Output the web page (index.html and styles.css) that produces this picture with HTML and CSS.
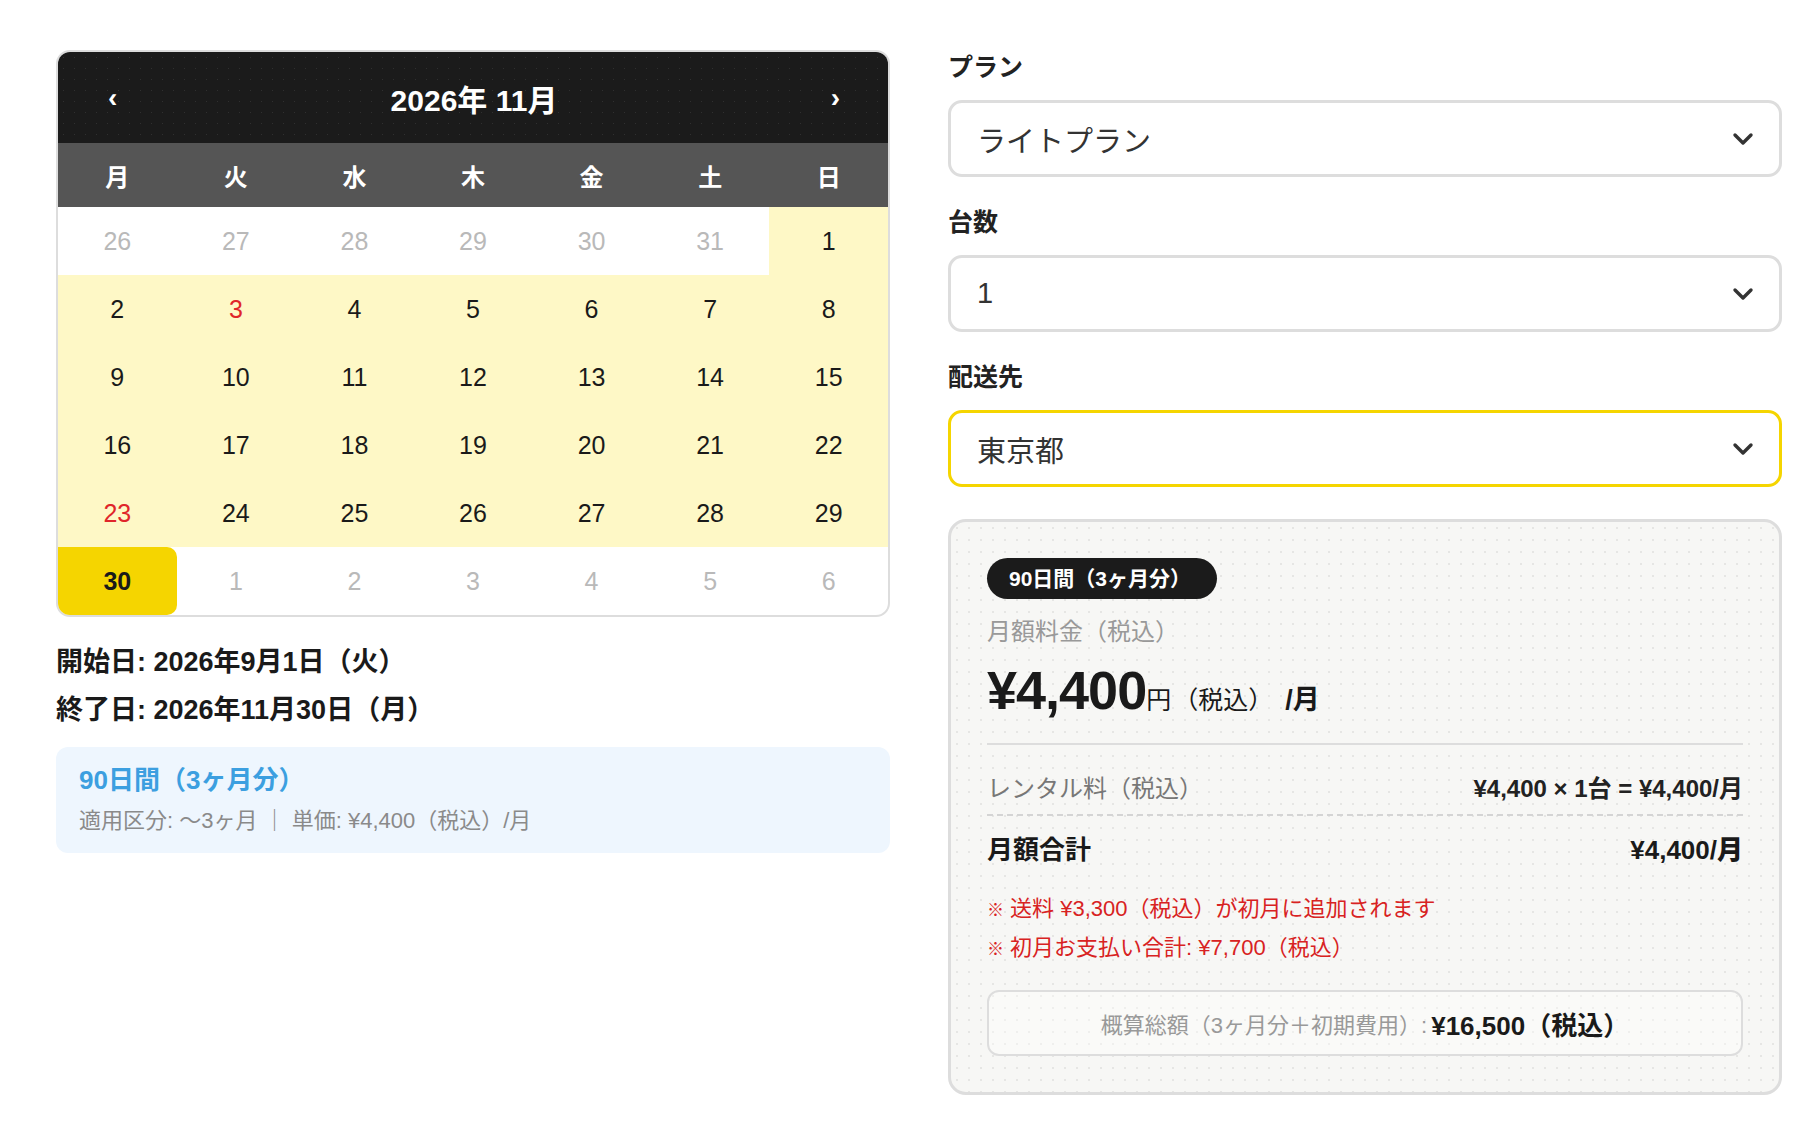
FILE: index.html
```html
<!DOCTYPE html>
<html lang="ja">
<head>
    <meta charset="UTF-8">
    <meta name="viewport" content="width=device-width, initial-scale=1.0">
    <title>レンタル期間の選択</title>
    <link rel="stylesheet" href="styles.css">
</head>
<body>
<div class="page">
    <section class="left">
        <div class="calendar">
            <div class="cal-head">
                <button class="nav">‹</button>
                <div class="cal-title">2026年 11月</div>
                <button class="nav">›</button>
            </div>
            <div class="weekdays">
                <span>月</span><span>火</span><span>水</span><span>木</span><span>金</span><span>土</span><span>日</span>
            </div>
            <div class="days">
                <span class="day other">26</span>
                <span class="day other">27</span>
                <span class="day other">28</span>
                <span class="day other">29</span>
                <span class="day other">30</span>
                <span class="day other">31</span>
                <span class="day range">1</span>

                <span class="day range">2</span>
                <span class="day range holiday">3</span>
                <span class="day range">4</span>
                <span class="day range">5</span>
                <span class="day range">6</span>
                <span class="day range">7</span>
                <span class="day range">8</span>

                <span class="day range">9</span>
                <span class="day range">10</span>
                <span class="day range">11</span>
                <span class="day range">12</span>
                <span class="day range">13</span>
                <span class="day range">14</span>
                <span class="day range">15</span>

                <span class="day range">16</span>
                <span class="day range">17</span>
                <span class="day range">18</span>
                <span class="day range">19</span>
                <span class="day range">20</span>
                <span class="day range">21</span>
                <span class="day range">22</span>

                <span class="day range holiday">23</span>
                <span class="day range">24</span>
                <span class="day range">25</span>
                <span class="day range">26</span>
                <span class="day range">27</span>
                <span class="day range">28</span>
                <span class="day range">29</span>

                <span class="day end">30</span>
                <span class="day other">1</span>
                <span class="day other">2</span>
                <span class="day other">3</span>
                <span class="day other">4</span>
                <span class="day other">5</span>
                <span class="day other">6</span>
            </div>
        </div>

        <div class="dates">
            <p>開始日: 2026年9月1日（火）</p>
            <p>終了日: 2026年11月30日（月）</p>
        </div>

        <div class="period-info">
            <div class="period-title">90日間（3ヶ月分）</div>
            <div class="period-note">適用区分: 〜3ヶ月 ｜ 単価: ¥4,400（税込）/月</div>
        </div>
    </section>

    <section class="right">
        <div class="field">
            <div class="field-label">プラン</div>
            <div class="select">
                <span>ライトプラン</span>
                <svg class="chev" width="22" height="14" viewBox="0 0 22 14"><polyline points="3,3 11,11 19,3" fill="none" stroke="#333" stroke-width="3.4" stroke-linecap="round" stroke-linejoin="round"/></svg>
            </div>
        </div>
        <div class="field">
            <div class="field-label">台数</div>
            <div class="select">
                <span>1</span>
                <svg class="chev" width="22" height="14" viewBox="0 0 22 14"><polyline points="3,3 11,11 19,3" fill="none" stroke="#333" stroke-width="3.4" stroke-linecap="round" stroke-linejoin="round"/></svg>
            </div>
        </div>
        <div class="field">
            <div class="field-label">配送先</div>
            <div class="select active">
                <span>東京都</span>
                <svg class="chev" width="22" height="14" viewBox="0 0 22 14"><polyline points="3,3 11,11 19,3" fill="none" stroke="#333" stroke-width="3.4" stroke-linecap="round" stroke-linejoin="round"/></svg>
            </div>
        </div>

        <div class="summary">
            <span class="badge">90日間（3ヶ月分）</span>
            <div class="price-label">月額料金（税込）</div>
            <div class="price">
                <span class="price-num">¥4,400</span><span class="price-yen">円</span><span class="price-tax">（税込）</span><span class="price-per">/月</span>
            </div>
            <div class="row rental">
                <span>レンタル料（税込）</span>
                <b>¥4,400 × 1台 = ¥4,400/月</b>
            </div>
            <div class="row total">
                <span>月額合計</span>
                <b>¥4,400/月</b>
            </div>
            <ul class="notes">
                <li><i>※</i> 送料 ¥3,300（税込）が初月に追加されます</li>
                <li><i>※</i> 初月お支払い合計: ¥7,700（税込）</li>
            </ul>
            <div class="estimate">
                <span>概算総額（3ヶ月分＋初期費用）:</span> <b>¥16,500（税込）</b>
            </div>
        </div>
    </section>
</div>
</body>
</html>
```

FILE: styles.css
```css
body{
    margin: 0;
    background: #fff;
    color: #1a1a1a;
    font-family: "Liberation Sans", "Noto Sans CJK JP", sans-serif;
}
.page{
    display: grid;
    grid-template-columns: 834px 834px;
    column-gap: 58px;
    padding: 50px 0 0 56px;
}

/* calendar */
.calendar{
    border: 2px solid #ddd;
    border-radius: 14px;
    overflow: hidden;
    background: #fff;
}
.cal-head{
    height: 91px;
    display: flex;
    align-items: center;
    justify-content: space-between;
    padding: 0 44px 0 46px;
    background-color: #1b1b1b;
    background-image: radial-gradient(rgba(255,255,255,0.09) 0.8px, transparent 1px);
    background-size: 11px 11px;
}
.nav{
    background: none;
    border: 0;
    color: #fff;
    font: 700 28px "Liberation Sans", sans-serif;
    padding: 0 4px;
    cursor: pointer;
}
.cal-title{
    color: #fff;
    font-size: 30px;
    font-weight: 700;
}
.weekdays{
    height: 64px;
    display: grid;
    grid-template-columns: repeat(7, 1fr);
    align-items: center;
    background: #555;
    color: #fff;
    font-size: 24px;
    font-weight: 600;
    text-align: center;
}
.days{
    display: grid;
    grid-template-columns: repeat(7, 1fr);
    grid-auto-rows: 68px;
}
.day{
    display: flex;
    align-items: center;
    justify-content: center;
    font-size: 25px;
    color: #1a1a1a;
}
.day.other{
    color: #b9b9b9;
}
.day.range{
    background: #fef8c6;
}
.day.holiday{
    color: #e0262a;
}
.day.end{
    background: #f5d500;
    font-weight: 700;
    border-radius: 0 10px 10px 0;
}

.dates{
    margin-top: 21px;
}
.dates p{
    margin: 0;
    font-size: 27px;
    font-weight: 700;
    line-height: 48px;
}
.period-info{
    margin-top: 13px;
    background: #eef6fe;
    border-radius: 12px;
    padding: 16px 23px 17px;
}
.period-title{
    color: #3c9fe0;
    font-size: 26px;
    font-weight: 700;
    line-height: 34px;
}
.period-note{
    margin-top: 9px;
    color: #8a8a8a;
    font-size: 22px;
    line-height: 30px;
}

/* form */
.right{
    display: flex;
    flex-direction: column;
    gap: 28px;
}
.field-label{
    font-size: 25px;
    font-weight: 700;
    line-height: 34px;
    color: #222;
    margin-bottom: 16px;
}
.select{
    height: 77px;
    box-sizing: border-box;
    border: 3px solid #ddd;
    border-radius: 14px;
    display: flex;
    align-items: center;
    justify-content: space-between;
    padding: 0 25px 0 26px;
    font-size: 29px;
    color: #333;
    background: #fff;
}
.select.active{
    border-color: #f5d500;
}

/* summary card */
.summary{
    margin-top: 4px;
    border: 3px solid #ddd;
    border-radius: 18px;
    padding: 36px;
    background-color: #f7f7f5;
    background-image: radial-gradient(rgba(0,0,0,0.07) 0.8px, transparent 1px);
    background-size: 12px 12px;
    display: flex;
    flex-direction: column;
    align-items: flex-start;
}
.badge{
    display: inline-block;
    background: #1b1b1b;
    color: #fff;
    font-size: 21px;
    font-weight: 700;
    line-height: 41px;
    padding: 0 26px 0 22px;
    border-radius: 21px;
}
.price-label{
    margin-top: 17px;
    color: #999;
    font-size: 24px;
    line-height: 32px;
}
.price{
    margin-top: 12px;
    height: 60px;
    display: flex;
    align-items: baseline;
    color: #1a1a1a;
}
.price-num{
    font-size: 54px;
    font-weight: 700;
    letter-spacing: -1px;
    line-height: 60px;
}
.price-yen{
    font-size: 25px;
}
.price-tax{
    font-size: 25px;
    margin-left: 2px;
}
.price-per{
    font-size: 27px;
    font-weight: 700;
    margin-left: 12px;
}
.row{
    align-self: stretch;
    display: flex;
    justify-content: space-between;
    align-items: baseline;
}
.rental{
    margin-top: 23px;
    border-top: 2px solid #ddd;
    border-bottom: 2px dashed #d4d4d4;
    padding: 28px 0 9px;
    font-size: 24px;
    line-height: 32px;
}
.rental span{
    color: #777;
}
.rental b{
    font-size: 24px;
    color: #222;
}
.total{
    padding-top: 17px;
    font-size: 26px;
    font-weight: 700;
    line-height: 34px;
}
.notes{
    list-style: none;
    margin: 23px 0 0;
    padding: 0;
    color: #d82222;
    font-size: 22px;
    line-height: 37px;
}
.notes i{
    font-style: normal;
    font-size: 17px;
}
.estimate{
    align-self: stretch;
    margin-top: 22px;
    height: 66px;
    box-sizing: border-box;
    border: 2px solid #ddd;
    border-radius: 12px;
    background: rgba(255,255,255,0.35);
    display: flex;
    align-items: center;
    justify-content: center;
    gap: 4px;
    font-size: 22px;
    color: #999;
}
.estimate b{
    color: #1a1a1a;
    font-size: 26px;
}
```
